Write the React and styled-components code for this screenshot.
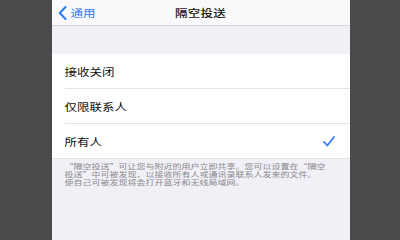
import styled, { createGlobalStyle } from 'styled-components'

const Global = createGlobalStyle`
	html, body {
		margin: 0;
		padding: 0;
		background: #4a4a4a;
	}
	body {
		font-family: "Noto Sans CJK SC", "Noto Sans", sans-serif;
	}
`

const Frame = styled.div`
	display: flex;
	justify-content: center;
	width: 400px;
	height: 240px;
	background: #4a4a4a;
	padding-left: 1px;
	box-sizing: border-box;
`

const Screen = styled.div`
	width: 298px;
	height: 240px;
	display: flex;
	flex-direction: column;
	background: #f1f0f6;
	overflow: hidden;
`

// the capture is squashed vertically, so text is drawn a little flatter
const Label = styled.span`
	display: inline-block;
	transform: scaleY(0.8);
`

const NavBar = styled.div`
	position: relative;
	height: 26px;
	display: flex;
	align-items: center;
	justify-content: center;
	background: #f9f9fb;
	border-bottom: 1px solid #d6d6da;
	box-sizing: border-box;
`

const Back = styled.div`
	position: absolute;
	left: 6px;
	top: 0;
	height: 100%;
	display: flex;
	align-items: center;
	gap: 4px;
	color: #2f7bf5;
	font-size: 12.5px;
`

const Title = styled.div`
	font-size: 12.5px;
	font-weight: 500;
	color: #111;
	letter-spacing: 0.3px;
`

const Spacer = styled.div`
	height: 28px;
`

const List = styled.div`
	background: #fff;
	border-bottom: 1px solid #e2e2e6;
`

const Row = styled.div`
	height: 34px;
	margin-left: 13px;
	padding-right: 15px;
	display: flex;
	align-items: center;
	justify-content: space-between;
	border-bottom: ${(p) => (p.$last ? 'none' : '1px solid #e4e4e8')};
	font-size: 12.5px;
	color: #111;
`

const Footer = styled.div`
	padding: 5px 10px 0 13px;
	font-size: 9px;
	line-height: 10px;
	color: #8a8a8e;
	white-space: nowrap;
	transform: scaleY(0.8);
	transform-origin: top left;
`

const Chevron = () => (
	<svg width="9" height="14" viewBox="0 0 9 14">
		<path d="M7.5 1 L1.8 7 L7.5 13" fill="none" stroke="#2f7bf5" strokeWidth="2" strokeLinecap="round" strokeLinejoin="round" />
	</svg>
)

const Check = () => (
	<svg width="12" height="11" viewBox="0 0 12 11">
		<path d="M1 6 L4.3 9.5 L11 1" fill="none" stroke="#2f7bf5" strokeWidth="1.8" strokeLinecap="round" strokeLinejoin="round" />
	</svg>
)

const options = ['接收关闭', '仅限联系人', '所有人']

export default function App() {
	return (
		<Frame>
			<Global />
			<Screen>
				<NavBar>
					<Back>
						<Chevron />
						<Label>通用</Label>
					</Back>
					<Title>
						<Label>隔空投送</Label>
					</Title>
				</NavBar>
				<Spacer />
				<List>
					{options.map((o, i) => (
						<Row key={o} $last={i === options.length - 1}>
							<Label>{o}</Label>
							{i === 2 && <Check />}
						</Row>
					))}
				</List>
				<Footer>
					“隔空投送”可让您与附近的用户立即共享。您可以设置在“隔空
					<br />
					投送”中可被发现，以接收所有人或通讯录联系人发来的文件。
					<br />
					使自己可被发现将会打开蓝牙和无线局域网。
				</Footer>
			</Screen>
		</Frame>
	)
}
